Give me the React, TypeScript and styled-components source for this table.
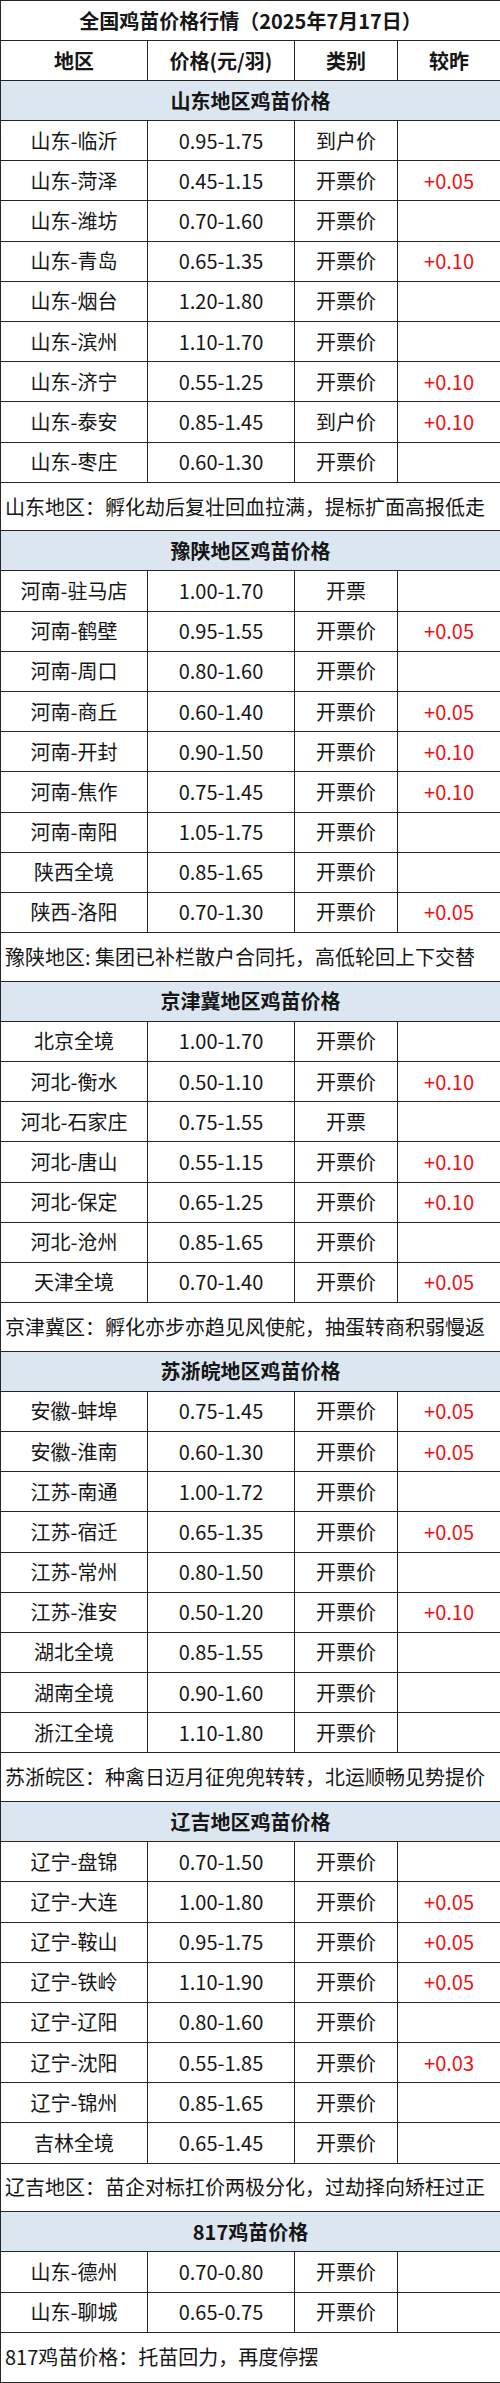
import React from "react";
import styled, { createGlobalStyle } from "styled-components";

const GlobalStyle = createGlobalStyle`
  html, body {
    margin: 0;
    padding: 0;
    background: #ffffff;
  }
  body {
    font-family: "Noto Sans CJK SC", "Noto Sans", sans-serif;
    color: #111111;
  }
`;

type Row = [string, string, string, string?];

type Section = {
  title: string;
  rows: Row[];
  note: string;
};

const sections: Section[] = [
  {
    title: "山东地区鸡苗价格",
    rows: [
      ["山东-临沂", "0.95-1.75", "到户价"],
      ["山东-菏泽", "0.45-1.15", "开票价", "+0.05"],
      ["山东-潍坊", "0.70-1.60", "开票价"],
      ["山东-青岛", "0.65-1.35", "开票价", "+0.10"],
      ["山东-烟台", "1.20-1.80", "开票价"],
      ["山东-滨州", "1.10-1.70", "开票价"],
      ["山东-济宁", "0.55-1.25", "开票价", "+0.10"],
      ["山东-泰安", "0.85-1.45", "到户价", "+0.10"],
      ["山东-枣庄", "0.60-1.30", "开票价"],
    ],
    note: "山东地区：孵化劫后复壮回血拉满，提标扩面高报低走",
  },
  {
    title: "豫陕地区鸡苗价格",
    rows: [
      ["河南-驻马店", "1.00-1.70", "开票"],
      ["河南-鹤壁", "0.95-1.55", "开票价", "+0.05"],
      ["河南-周口", "0.80-1.60", "开票价"],
      ["河南-商丘", "0.60-1.40", "开票价", "+0.05"],
      ["河南-开封", "0.90-1.50", "开票价", "+0.10"],
      ["河南-焦作", "0.75-1.45", "开票价", "+0.10"],
      ["河南-南阳", "1.05-1.75", "开票价"],
      ["陕西全境", "0.85-1.65", "开票价"],
      ["陕西-洛阳", "0.70-1.30", "开票价", "+0.05"],
    ],
    note: "豫陕地区: 集团已补栏散户合同托，高低轮回上下交替",
  },
  {
    title: "京津冀地区鸡苗价格",
    rows: [
      ["北京全境", "1.00-1.70", "开票价"],
      ["河北-衡水", "0.50-1.10", "开票价", "+0.10"],
      ["河北-石家庄", "0.75-1.55", "开票"],
      ["河北-唐山", "0.55-1.15", "开票价", "+0.10"],
      ["河北-保定", "0.65-1.25", "开票价", "+0.10"],
      ["河北-沧州", "0.85-1.65", "开票价"],
      ["天津全境", "0.70-1.40", "开票价", "+0.05"],
    ],
    note: "京津冀区：孵化亦步亦趋见风使舵，抽蛋转商积弱慢返",
  },
  {
    title: "苏浙皖地区鸡苗价格",
    rows: [
      ["安徽-蚌埠", "0.75-1.45", "开票价", "+0.05"],
      ["安徽-淮南", "0.60-1.30", "开票价", "+0.05"],
      ["江苏-南通", "1.00-1.72", "开票价"],
      ["江苏-宿迁", "0.65-1.35", "开票价", "+0.05"],
      ["江苏-常州", "0.80-1.50", "开票价"],
      ["江苏-淮安", "0.50-1.20", "开票价", "+0.10"],
      ["湖北全境", "0.85-1.55", "开票价"],
      ["湖南全境", "0.90-1.60", "开票价"],
      ["浙江全境", "1.10-1.80", "开票价"],
    ],
    note: "苏浙皖区：种禽日迈月征兜兜转转，北运顺畅见势提价",
  },
  {
    title: "辽吉地区鸡苗价格",
    rows: [
      ["辽宁-盘锦", "0.70-1.50", "开票价"],
      ["辽宁-大连", "1.00-1.80", "开票价", "+0.05"],
      ["辽宁-鞍山", "0.95-1.75", "开票价", "+0.05"],
      ["辽宁-铁岭", "1.10-1.90", "开票价", "+0.05"],
      ["辽宁-辽阳", "0.80-1.60", "开票价"],
      ["辽宁-沈阳", "0.55-1.85", "开票价", "+0.03"],
      ["辽宁-锦州", "0.85-1.65", "开票价"],
      ["吉林全境", "0.65-1.45", "开票价"],
    ],
    note: "辽吉地区：苗企对标扛价两极分化，过劫择向矫枉过正",
  },
  {
    title: "817鸡苗价格",
    rows: [
      ["山东-德州", "0.70-0.80", "开票价"],
      ["山东-聊城", "0.65-0.75", "开票价"],
    ],
    note: "817鸡苗价格：托苗回力，再度停摆",
  },
];

const Table = styled.table`
  width: 500px;
  border-collapse: collapse;
  table-layout: fixed;
  font-size: 20px;
  line-height: 1;
`;

const Cell = styled.td<{ $red?: boolean }>`
  box-sizing: border-box;
  border: 1px solid #262626;
  height: 40px;
  padding: 0;
  text-align: center;
  vertical-align: middle;
  color: ${(p) => (p.$red ? "#f01010" : "#161616")};
  white-space: nowrap;
  overflow: hidden;
`;

const HeadCell = styled(Cell)`
  font-weight: 700;
`;

const SectionCell = styled(HeadCell)`
  background: #dce6f1;
`;

const NoteCell = styled(Cell)<{ $tall?: boolean }>`
  height: ${(p) => (p.$tall ? "50px" : "48.7px")};
  text-align: left;
  padding-left: 4px;
`;

const DataRow = styled.tr`
  height: 40.2px;
`;

function App() {
  return (
    <>
      <GlobalStyle />
      <Table>
        <colgroup>
          <col style={{ width: 147 }} />
          <col style={{ width: 147 }} />
          <col style={{ width: 103 }} />
          <col style={{ width: 103 }} />
        </colgroup>
        <tbody>
          <tr>
            <HeadCell colSpan={4}>全国鸡苗价格行情（2025年7月17日）</HeadCell>
          </tr>
          <tr>
            <HeadCell>地区</HeadCell>
            <HeadCell>价格(元/羽)</HeadCell>
            <HeadCell>类别</HeadCell>
            <HeadCell>较昨</HeadCell>
          </tr>
          {sections.map((s, i) => (
            <React.Fragment key={s.title}>
              <tr>
                <SectionCell colSpan={4}>{s.title}</SectionCell>
              </tr>
              {s.rows.map((r) => (
                <DataRow key={r[0]}>
                  <Cell>{r[0]}</Cell>
                  <Cell>{r[1]}</Cell>
                  <Cell>{r[2]}</Cell>
                  <Cell $red>{r[3] ?? ""}</Cell>
                </DataRow>
              ))}
              <tr>
                <NoteCell colSpan={4} $tall={i === sections.length - 1}>
                  {s.note}
                </NoteCell>
              </tr>
            </React.Fragment>
          ))}
        </tbody>
      </Table>
    </>
  );
}

export default App;
